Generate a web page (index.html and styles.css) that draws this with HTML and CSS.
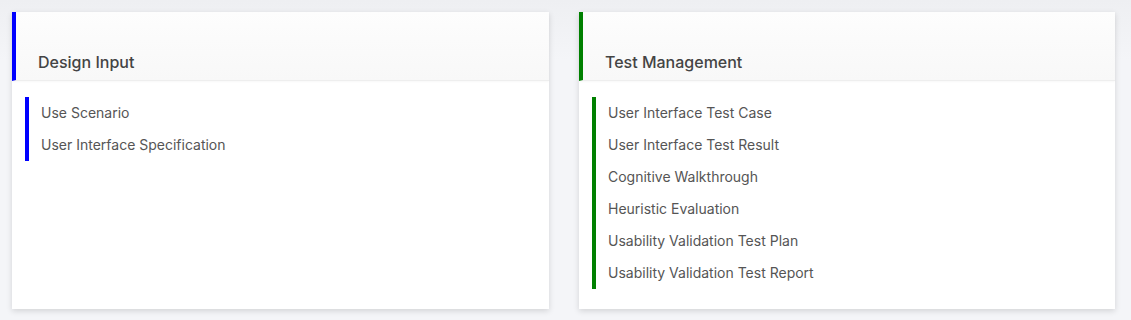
FILE: index.html
```html
<!DOCTYPE html>
<html lang="en">
<head>
  <meta charset="UTF-8" />
  <meta name="viewport" content="width=device-width, initial-scale=1.0"/>
  <title>Process Areas</title>
  <link rel="stylesheet" href="styles.css">
</head>
<body>

  <div class="board">
    <div class="card card-blue">
      <div class="card-head">
        <h2>Design Input</h2>
      </div>
      <ul class="doc-list">
        <li>Use Scenario</li>
        <li>User Interface Specification</li>
      </ul>
    </div>

    <div class="card card-green">
      <div class="card-head">
        <h2>Test Management</h2>
      </div>
      <ul class="doc-list">
        <li>User Interface Test Case</li>
        <li>User Interface Test Result</li>
        <li>Cognitive Walkthrough</li>
        <li>Heuristic Evaluation</li>
        <li>Usability Validation Test Plan</li>
        <li>Usability Validation Test Report</li>
      </ul>
    </div>
  </div>

</body>
</html>
```

FILE: styles.css
```css
body {
  font-family: 'Inter', 'Liberation Sans', sans-serif;
  background: linear-gradient(#eeeff2, #f4f5f8 60px);
  margin: 0;
  padding: 0;
  min-height: 320px;
}
.board {
  display: grid;
  grid-template-columns: 537px 536px;
  gap: 30px;
  padding: 12px 16px 11px 12px;
}
.card {
  background: white;
  box-shadow: 0 2px 6px rgba(0, 0, 0, 0.14);
  padding-bottom: 20px;
}
.card-head {
  padding: 40px 22px 8px;
  background: linear-gradient(#fdfdfd, #f8f8f8);
  border-left: 4px solid;
  border-bottom: 1px solid #eeeeee;
  box-shadow: 0 1px 2px rgba(0, 0, 0, 0.03);
}
.card-head h2 {
  margin: 0;
  font-size: 16px;
  line-height: 20px;
  font-weight: 500;
  color: #444;
}
.doc-list {
  list-style: none;
  margin: 16px 0 0 13px;
  padding: 0 0 0 12px;
  border-left: 4px solid;
}
.doc-list li {
  font-size: 14px;
  line-height: 32px;
  color: #555;
}
.card-blue .card-head,
.card-blue .doc-list {
  border-left-color: #0000ff;
}
.card-green .card-head,
.card-green .doc-list {
  border-left-color: #008000;
}
```
